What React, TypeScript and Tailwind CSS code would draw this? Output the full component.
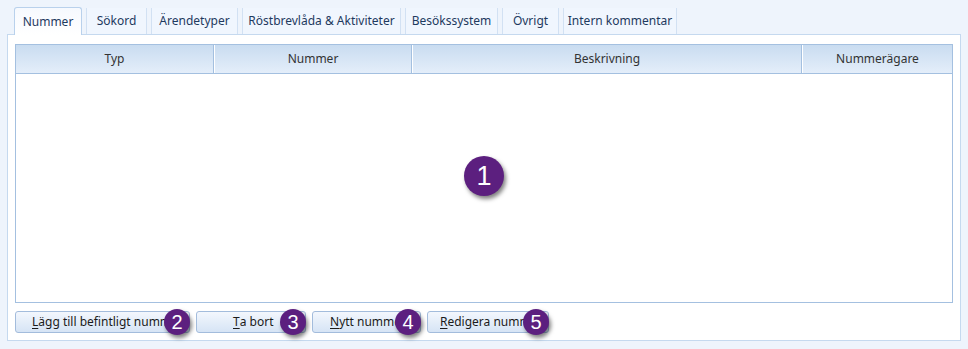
const tabs = [
  { label: 'Nummer', w: 'w-[68px]', active: true },
  { label: 'Sökord', w: 'w-[61px]' },
  { label: 'Ärendetyper', w: 'w-[87px]' },
  { label: 'Röstbrevlåda & Aktiviteter', w: 'w-[159px]' },
  { label: 'Besökssystem', w: 'w-[93px]' },
  { label: 'Övrigt', w: 'w-[57px]' },
  { label: 'Intern kommentar', w: 'w-[114px]' },
];

function Badge({ n, big = false }: { n: number; big?: boolean }) {
  return (
    <span
      className={`flex items-center justify-center rounded-full bg-[#5c1f7f] text-white shadow-[2px_3px_4px_rgba(0,0,0,0.5)] ${
        big ? 'w-[40px] h-[40px] text-[27px]' : 'w-[26px] h-[26px] text-[20px]'
      }`}
      style={{ fontFamily: '"Liberation Sans", Arial, sans-serif' }}
    >
      {n}
    </span>
  );
}

// the numbered badge sits on top of the button's right end, over the label
function Btn({ first, rest, w, pl, n }: { first: string; rest: string; w: string; pl: string; n: number }) {
  return (
    <div className={`relative ${w} h-[22px]`}>
      <button
        className={`w-full h-full rounded-[3px] border border-[#a3bcdc] bg-gradient-to-b from-[#f3f7fd] to-[#d6e4f5] text-[12px] text-[#1b1b1b] flex items-center whitespace-nowrap overflow-hidden ${pl}`}
      >
        <span className="underline underline-offset-2">{first}</span>
        {rest}
      </button>
      <div className="absolute right-[0px] top-[-2px]">
        <Badge n={n} />
      </div>
    </div>
  );
}

export default function App() {
  return (
    <div
      className="w-[968px] h-[349px] bg-[#eef4fc] pt-[7px] px-[7px]"
      style={{ fontFamily: '"Noto Sans", "Open Sans", sans-serif' }}
    >
      <div className="flex items-end gap-[4px] pl-[7px] h-[27px]">
        {tabs.map((t) =>
          t.active ? (
            <div
              key={t.label}
              className={`${t.w} h-[28px] -mb-px z-10 relative flex items-center justify-center rounded-t-[3px] border border-b-0 border-[#b9d1ec] bg-gradient-to-b from-[#f6f9fe] to-white text-[12px] text-[#1e3a5f]`}
            >
              {t.label}
            </div>
          ) : (
            <div
              key={t.label}
              className={`${t.w} h-[26px] flex items-center justify-center border-x border-[#d2e1f3] bg-[#f0f6fe] text-[12px] text-[#1e3a5f]`}
            >
              {t.label}
            </div>
          )
        )}
      </div>

      <div className="h-[307px] bg-white border border-[#c5d9ef] pt-[9px] px-[7px] flex flex-col">
        <div className="h-[259px] border border-[#a4c0e0] flex flex-col">
          <div className="h-[29px] flex bg-gradient-to-b from-[#c9dcf0] to-[#e4eefa] border-b border-[#a4c0e0] text-[12px] text-[#333]">
            <div className="w-[198px] flex items-center justify-center border-r border-[#a4c0e0]">Typ</div>
            <div className="w-[198px] flex items-center justify-center border-l border-white border-r border-r-[#a4c0e0]">Nummer</div>
            <div className="w-[390px] flex items-center justify-center border-l border-white border-r border-r-[#a4c0e0]">Beskrivning</div>
            <div className="flex-1 flex items-center justify-center border-l border-white">Nummerägare</div>
          </div>
          <div className="relative flex-1">
            <div className="absolute top-[82px] left-1/2 -translate-x-1/2">
              <Badge n={1} big />
            </div>
          </div>
        </div>

        <div className="mt-[8px] flex gap-[6px]">
          <Btn first="L" rest="ägg till befintligt nummer" w="w-[175px]" pl="pl-[16px]" n={2} />
          <Btn first="T" rest="a bort" w="w-[110px]" pl="pl-[36px]" n={3} />
          <Btn first="N" rest="ytt nummer" w="w-[109px]" pl="pl-[17px]" n={4} />
          <Btn first="R" rest="edigera nummer" w="w-[122px]" pl="pl-[12px]" n={5} />
        </div>
      </div>
    </div>
  );
}
